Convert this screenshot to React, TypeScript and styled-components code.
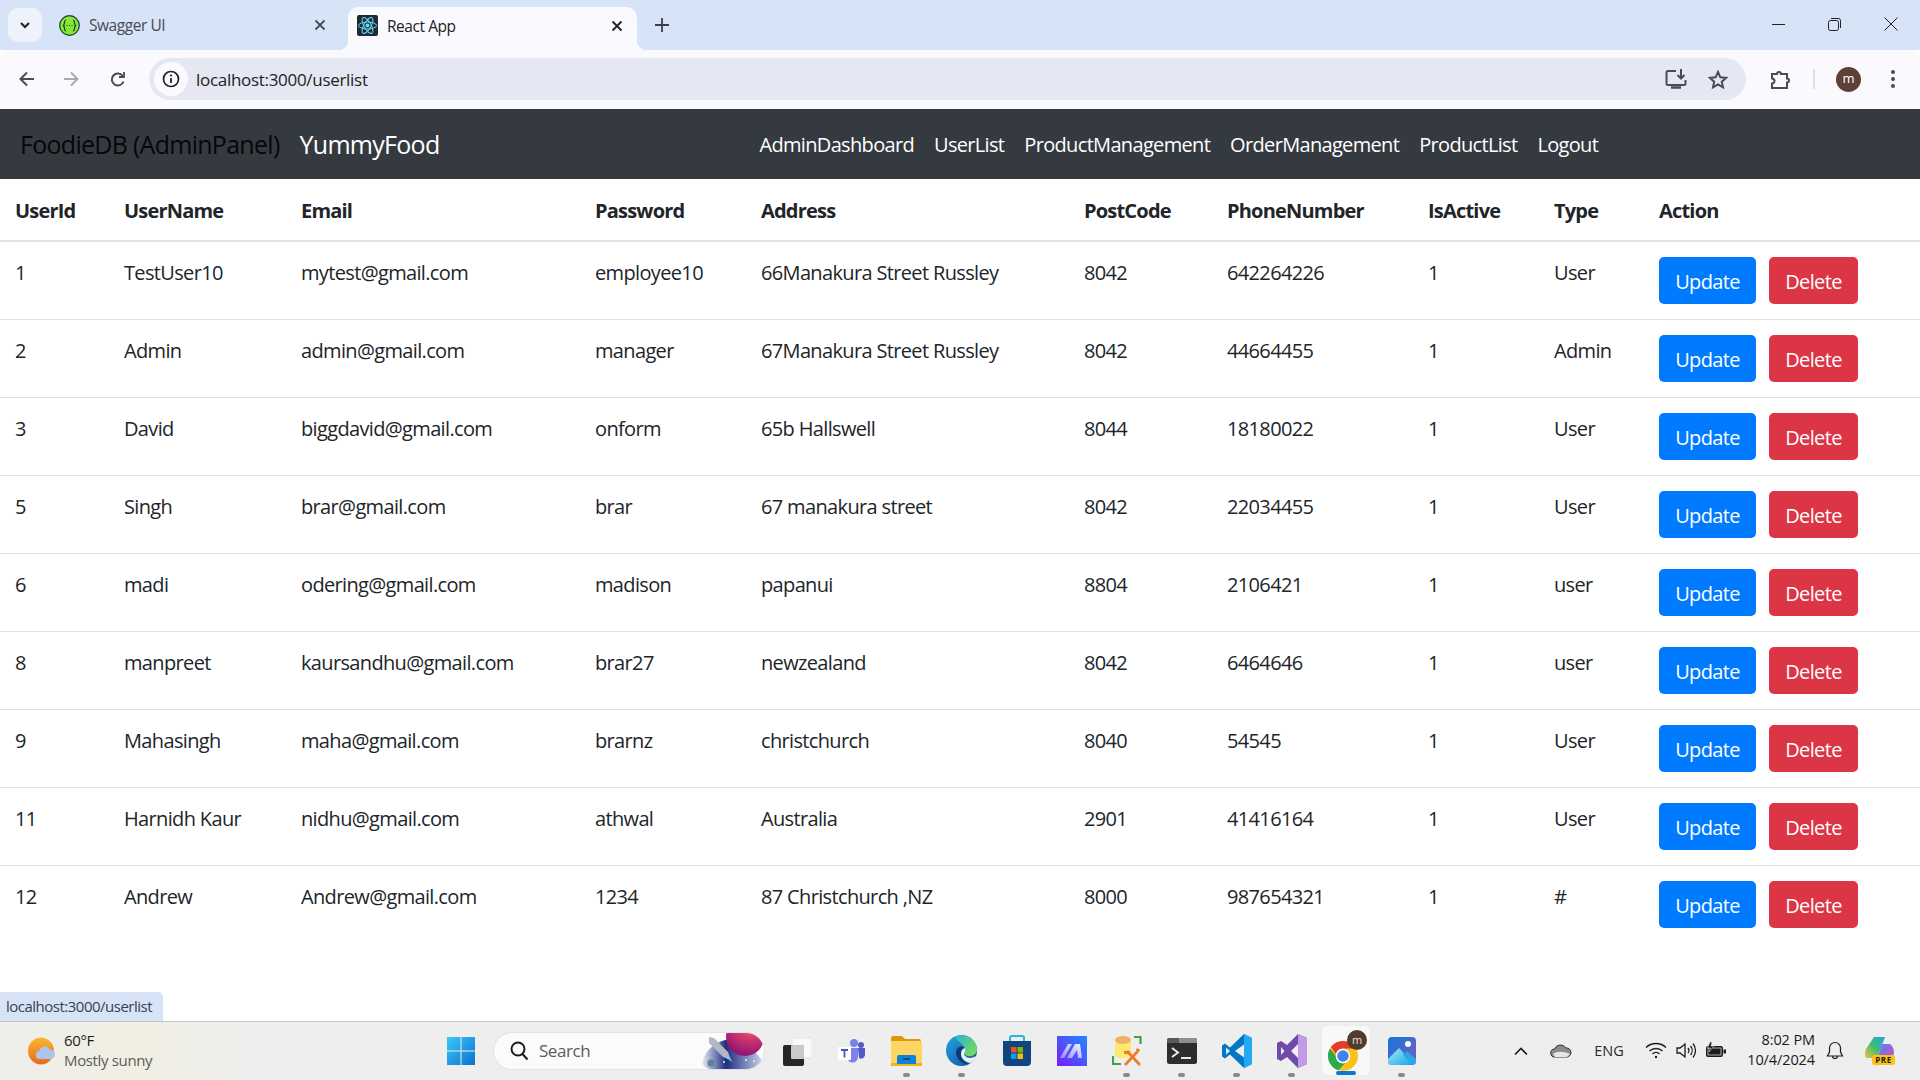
import React from "react";
import styled, { createGlobalStyle } from "styled-components";

const UI = `"Open Sans", "Noto Sans", "Liberation Sans", sans-serif`;

const Global = createGlobalStyle`
  html, body { margin: 0; padding: 0; background: #fff; }
  * { box-sizing: border-box; }
  #root { width: 1920px; height: 1080px; overflow: hidden; }
`;

const Screen = styled.div`
  position: relative;
  width: 1920px;
  height: 1080px;
  display: flex;
  flex-direction: column;
  font-family: ${UI};
  background: #fff;
  overflow: hidden;
`;

/* ---------- browser chrome ---------- */
const TabStrip = styled.div`
  height: 50px;
  background: #d7e3f7;
  display: flex;
  align-items: flex-end;
  padding-left: 8px;
`;
const TabMenu = styled.div`
  width: 34px;
  height: 34px;
  margin-bottom: 8px;
  border-radius: 10px;
  background: #eef2fb;
  display: flex;
  align-items: center;
  justify-content: center;
`;
const Tab = styled.div<{ $active?: boolean }>`
  position: relative;
  width: ${(p) => (p.$active ? "289px" : "295px")};
  height: ${(p) => (p.$active ? "43px" : "50px")};
  margin-left: ${(p) => (p.$active ? "3px" : "8px")};
  padding: ${(p) => (p.$active ? "0 14px 6px 9px" : "0 19px 0 9px")};
  display: flex;
  align-items: center;
  gap: 9px;
  font-size: 15.5px;
  letter-spacing: -0.45px;
  color: ${(p) => (p.$active ? "#1f2124" : "#474b52")};
  background: ${(p) => (p.$active ? "#f9f9fe" : "transparent")};
  border-radius: ${(p) => (p.$active ? "10px 10px 0 0" : "0")};
  ${(p) =>
    p.$active
      ? `&::before, &::after {
        content: "";
        position: absolute;
        bottom: 0;
        width: 10px;
        height: 10px;
      }
      &::before { left: -10px; background: radial-gradient(circle at 0 0, transparent 10px, #f9f9fe 10.5px); }
      &::after { right: -10px; background: radial-gradient(circle at 100% 0, transparent 10px, #f9f9fe 10.5px); }`
      : ""}
`;
const TabTitle = styled.span`
  flex: 1;
  white-space: nowrap;
`;
const NewTab = styled.div`
  width: 20px;
  height: 20px;
  margin: 0 0 15px 15px;
  display: flex;
  align-items: center;
  justify-content: center;
`;
const WindowControls = styled.div`
  margin-left: auto;
  height: 50px;
  display: flex;
  align-items: center;
  padding: 0 22px 2px 0;
  gap: 43px;
`;
const Toolbar = styled.div`
  height: 59px;
  background: #f9f9fe;
  border-radius: 10px 10px 0 0;
  display: flex;
  align-items: center;
  padding: 0 17px 1px 18px;
`;
const ToolButton = styled.div<{ $w?: number }>`
  width: ${(p) => p.$w ?? 44}px;
  height: 24px;
  display: flex;
  align-items: center;
  justify-content: flex-start;
`;
const AddressBar = styled.div`
  width: 1597px;
  height: 42px;
  margin-left: 7px;
  padding: 0 18px 0 5px;
  border-radius: 21px;
  background: #e5e8f3;
  display: flex;
  align-items: center;
`;
const InfoChip = styled.div`
  width: 34px;
  height: 34px;
  border-radius: 50%;
  background: #f9f9fe;
  display: flex;
  align-items: center;
  justify-content: center;
`;
const UrlText = styled.div`
  margin-left: 8px;
  flex: 1;
  font-size: 17px;
  letter-spacing: -0.3px;
  color: #1f2124;
`;
const AddressIcons = styled.div`
  display: flex;
  align-items: center;
  gap: 21px;
`;
const ToolRight = styled.div`
  flex: 1;
  display: flex;
  align-items: center;
  padding-left: 24px;
`;
const Divider = styled.div`
  width: 2px;
  height: 20px;
  margin: 0 21px 0 21px;
  background: #d3e1f8;
`;
const Avatar = styled.div`
  width: 25px;
  height: 25px;
  border-radius: 50%;
  background: #5d4037;
  color: #fff;
  font-size: 13px;
  line-height: 23px;
  text-align: center;
  margin-right: 29px;
`;

/* ---------- app navbar ---------- */
const Navbar = styled.nav`
  height: 70px;
  background: #343a40;
  display: flex;
  align-items: center;
  padding: 0 20px;
`;
const Brand = styled.a<{ $light?: boolean }>`
  font-size: 25px;
  letter-spacing: -0.72px;
  margin-right: 20px;
  white-space: nowrap;
  color: ${(p) => (p.$light ? "#fff" : "rgba(0,0,0,0.9)")};
`;
const NavLinks = styled.ul`
  list-style: none;
  margin: 0 0 0 300px;
  padding: 0;
  display: flex;
  gap: 20px;
`;
const NavLink = styled.li`
  font-size: 20px;
  letter-spacing: -0.67px;
  color: #fff;
  white-space: nowrap;
`;

/* ---------- table ---------- */
const Content = styled.main`
  flex: 1;
  min-height: 0;
`;
const Table = styled.table`
  width: 1920px;
  table-layout: fixed;
  border-collapse: collapse;
  color: #212529;
  font-size: 20px;
  line-height: 30px;
  letter-spacing: -0.65px;
`;
const Th = styled.th`
  text-align: left;
  font-weight: 700;
  padding: 16px 15px 14px;
  height: 62px;
  letter-spacing: -0.8px;
  border-bottom: 2px solid #dee2e6;
`;
const Tr = styled.tr`
  & + & td { border-top: 1px solid #dee2e6; }
`;
const Td = styled.td`
  padding: 16px 15px 14px;
  height: 78px;
  vertical-align: top;
  white-space: nowrap;
`;
const ActionTd = styled(Td)`
  padding: 15px;
`;
const Actions = styled.div`
  display: flex;
  gap: 13px;
`;
const Btn = styled.button<{ $danger?: boolean }>`
  height: 47px;
  width: ${(p) => (p.$danger ? "89px" : "97px")};
  border: 0;
  border-radius: 5px;
  padding: 2px 0 0;
  font-family: ${UI};
  font-size: 20px;
  letter-spacing: -0.65px;
  color: #fff;
  background: ${(p) => (p.$danger ? "#dc3545" : "#007bff")};
`;

const StatusBubble = styled.div`
  position: absolute;
  left: 0;
  bottom: 59px;
  width: 163px;
  height: 29px;
  padding-left: 6px;
  background: #d7e3f7;
  border-radius: 0 5px 0 0;
  font-size: 15px;
  line-height: 29px;
  letter-spacing: -0.5px;
  color: #3a4250;
`;

/* ---------- taskbar ---------- */
const Taskbar = styled.footer`
  height: 59px;
  border-top: 1px solid #c6c6c6;
  padding-bottom: 1px;
  background: linear-gradient(90deg, #eeeeec 0, #f1efe2 130px, #eeeeee 260px);
  display: flex;
  align-items: center;
  color: #1c1c1c;
`;
const Weather = styled.div`
  width: 446px;
  padding-left: 28px;
  display: flex;
  align-items: center;
  gap: 8px;
`;
const WeatherText = styled.div`
  font-size: 15px;
  line-height: 20px;
  letter-spacing: -0.35px;
  margin-bottom: 2px;
`;
const WeatherSub = styled.div`
  color: #5a5a5a;
`;
const SearchBox = styled.div`
  position: relative;
  width: 272px;
  height: 38px;
  margin-left: 17px;
  padding: 0 0 0 15px;
  background: #fbfbfb;
  border: 1px solid #e2e2e2;
  border-radius: 19px;
  display: flex;
  align-items: center;
  gap: 9px;
  font-size: 17px;
  letter-spacing: -0.45px;
  color: #5c5c5c;
  overflow: hidden;
`;
const SearchLabel = styled.span`
  flex: 1;
`;
const Slots = styled.div`
  margin-left: 4px;
  display: flex;
`;
const Slot = styled.div<{ $running?: boolean; $active?: boolean }>`
  position: relative;
  width: 55px;
  height: 55px;
  display: flex;
  align-items: center;
  justify-content: center;
  ${(p) =>
    p.$active
      ? `&::before { content: ""; position: absolute; top: 3px; bottom: 3px; left: 3px; right: 4px; border-radius: 5px; background: #f8f8f8; box-shadow: 0 0 0 1px #ececec; }
      &::after { content: ""; position: absolute; bottom: 3px; left: 17px; width: 20px; height: 4px; border-radius: 2px; background: #0a78d4; }`
      : p.$running
      ? `&::after { content: ""; position: absolute; bottom: 1px; left: 24px; width: 7px; height: 4px; border-radius: 2px; background: #8a8a8a; }`
      : ""}
  & > svg { position: relative; z-index: 1; }
`;
const Tray = styled.div`
  margin-left: auto;
  padding-right: 15px;
  display: flex;
  align-items: center;
`;
const TrayItem = styled.div<{ $w: number }>`
  width: ${(p) => p.$w}px;
  display: flex;
  align-items: center;
  justify-content: center;
  font-size: 14.5px;
  color: #2b2b2b;
`;
const Clock = styled.div`
  width: 80px;
  text-align: right;
  font-size: 14.5px;
  line-height: 20px;
  letter-spacing: -0.1px;
  color: #1c1c1c;
  margin-bottom: 2px;
`;

/* ---------- icons ---------- */
const Chevron = () => (
  <svg width="14" height="14" viewBox="0 0 14 14"><path d="M3 5l4 4 4-4" fill="none" stroke="#1f2124" strokeWidth="2" /></svg>
);
const Close = ({ c = "#474b52" }: { c?: string }) => (
  <svg width="12" height="12" viewBox="0 0 12 12" style={{ flex: "none" }}><path d="M1.5 1.5l9 9M10.5 1.5l-9 9" stroke={c} strokeWidth="1.8" /></svg>
);
const SwaggerIcon = () => (
  <svg width="21" height="21" viewBox="0 0 21 21" style={{ flex: "none" }}>
    <circle cx="10.5" cy="10.5" r="9.8" fill="#85ea2d" stroke="#173647" strokeWidth="1.2" />
    <path d="M7 5c-2 0-1 4-2.500 5.500C6 12 5 16 7 16M14 5c2 0 1 4 2.500 5.500C15 12 16 16 14 16" fill="none" stroke="#173647" strokeWidth="1.2" />
    <path d="M7.500 10.500h1M10 10.500h1M12.500 10.500h1" stroke="#173647" strokeWidth="1.2" />
  </svg>
);
const ReactIcon = () => (
  <svg width="21" height="21" viewBox="0 0 21 21" style={{ flex: "none" }}>
    <rect width="21" height="21" rx="2" fill="#222a31" />
    <g fill="none" stroke="#61dafb" strokeWidth="1">
      <ellipse cx="10.5" cy="10.5" rx="9" ry="3.5" />
      <ellipse cx="10.5" cy="10.5" rx="9" ry="3.5" transform="rotate(60 10.5 10.5)" />
      <ellipse cx="10.5" cy="10.5" rx="9" ry="3.5" transform="rotate(120 10.5 10.5)" />
    </g>
    <circle cx="10.5" cy="10.5" r="2" fill="#61dafb" />
  </svg>
);
const Plus = () => (
  <svg width="14" height="14" viewBox="0 0 14 14"><path d="M7 0v14M0 7h14" stroke="#3c4046" strokeWidth="1.8" /></svg>
);
const MinIcon = () => (
  <svg width="13" height="13" viewBox="0 0 13 13"><path d="M0 6.500h13" stroke="#1f2124" /></svg>
);
const RestoreIcon = () => (
  <svg width="13" height="13" viewBox="0 0 13 13" fill="none" stroke="#1f2124">
    <rect x="0.5" y="2.500" width="10" height="10" rx="2" />
    <path d="M3 .5h7.500a2 2 0 012 2V10" />
  </svg>
);
const CloseWin = () => (
  <svg width="14" height="14" viewBox="0 0 14 14"><path d="M.5.5l13 13M13.500.5l-13 13" stroke="#1f2124" /></svg>
);
const Arrow = ({ c, flip }: { c: string; flip?: boolean }) => (
  <svg width="18" height="18" viewBox="0 0 18 18" style={flip ? { transform: "scaleX(-1)" } : undefined}>
    <path d="M16 9H3M9 2.500L2.500 9 9 15.500" fill="none" stroke={c} strokeWidth="2" />
  </svg>
);
const Reload = () => (
  <svg width="18" height="18" viewBox="0 0 18 18" fill="none" stroke="#474c55" strokeWidth="2">
    <path d="M14.500 11.500a6 6 0 11-.8-5.500" />
    <path d="M15 2v5H10" strokeWidth="1.8" />
  </svg>
);
const Info = () => (
  <svg width="18" height="18" viewBox="0 0 18 18">
    <circle cx="9" cy="9" r="7.500" fill="none" stroke="#1f2124" strokeWidth="1.700" />
    <path d="M9 8v5" stroke="#1f2124" strokeWidth="1.800" />
    <circle cx="9" cy="5.500" r="1.100" fill="#1f2124" />
  </svg>
);
const InstallIcon = () => (
  <svg width="22" height="20" viewBox="0 0 22 20" fill="none" stroke="#474c55" strokeWidth="2">
    <path d="M11 2H3a1.500 1.500 0 00-1.500 1.500v11A1.500 1.500 0 003 16h16a1.500 1.500 0 001.500-1.500V11" />
    <path d="M6 18.500h10" strokeWidth="2.500" />
    <path d="M16 0v9M12.500 6l3.500 3.500L19.500 6" />
  </svg>
);
const Star = () => (
  <svg width="20" height="19" viewBox="0 0 20 19"><path d="M10 2l2.400 5.300 5.700.6-4.300 3.800 1.200 5.700L10 14.500l-5 2.900 1.200-5.700L1.900 7.900l5.700-.6z" fill="none" stroke="#474c55" strokeWidth="2" /></svg>
);
const Puzzle = () => (
  <svg width="22" height="22" viewBox="0 0 22 22"><path d="M2 6h5a2 2 0 114 0h6v4.500a2 2 0 110 4V20H2v-4.500a2.500 2.500 0 000-5z" fill="none" stroke="#474c55" strokeWidth="2" /></svg>
);
const Dots = () => (
  <svg width="6" height="20" viewBox="0 0 6 20" fill="#474c55"><circle cx="3" cy="3" r="2" /><circle cx="3" cy="10" r="2" /><circle cx="3" cy="17" r="2" /></svg>
);
const WeatherIcon = () => (
  <svg width="28" height="28" viewBox="0 0 28 28" style={{ flex: "none" }}>
    <defs><linearGradient id="sun" x1="0.5" y1="0" x2="0.5" y2="1"><stop offset="0" stopColor="#f7b733" /><stop offset="1" stopColor="#ea6a1c" /></linearGradient></defs>
    <ellipse cx="13" cy="14" rx="13" ry="13.500" fill="url(#sun)" />
    <path d="M12 22a4 4 0 01-.5-8 5.500 5.500 0 0110.500-1 4.500 4.500 0 011 9z" fill="#a9c7ee" />
  </svg>
);
const WinLogo = () => (
  <svg width="30" height="30" viewBox="0 0 30 30">
    <defs><linearGradient id="win" x1="0" y1="0" x2="1" y2="1"><stop offset="0" stopColor="#3cc8fb" /><stop offset="1" stopColor="#0a72cf" /></linearGradient></defs>
    <path d="M1 1h13.500v13.500H1zM15.500 1H29v13.500H15.500zM1 15.500h13.500V29H1zM15.500 15.500H29V29H15.500z" fill="url(#win)" />
  </svg>
);
const SearchGlyph = () => (
  <svg width="21" height="21" viewBox="0 0 21 21" style={{ flex: "none" }} fill="none" stroke="#1c1c1c" strokeWidth="2">
    <circle cx="9" cy="9" r="6.500" /><path d="M13.500 14l5 5.500" />
  </svg>
);
const SearchArt = () => (
  <svg width="64" height="36" viewBox="0 0 64 36" style={{ flex: "none" }}>
    <defs>
      <radialGradient id="pl" cx="0.65" cy="0.1" r="0.9"><stop offset="0" stopColor="#f59a5e" /><stop offset="0.45" stopColor="#d63a6f" /><stop offset="1" stopColor="#8f1470" /></radialGradient>
      <linearGradient id="sky" x1="0" y1="0" x2="1" y2="0"><stop offset="0" stopColor="#e9ecf8" /><stop offset="0.4" stopColor="#1f2f80" /><stop offset="1" stopColor="#c7cfe8" /></linearGradient>
    </defs>
    <path d="M2 30C6 14 20 6 34 6c12 4 24 14 28 22-4 6-10 8-14 8H12C8 36 4 34 2 30z" fill="url(#sky)" />
    <ellipse cx="45" cy="4" rx="19" ry="19" fill="url(#pl)" />
    <path d="M9 4l5 1 14 14 3 8-8-3L9 10z" fill="#b4b7c3" />
    <path d="M27 22l6 7-7-4z" fill="#7ec8f5" />
    <circle cx="11" cy="30" r="3.500" fill="#5f8297" />
    <circle cx="24" cy="29" r="1" fill="#eee" /><circle cx="46" cy="27" r="1" fill="#eee" /><circle cx="54" cy="28" r="1" fill="#eee" />
  </svg>
);
const TaskView = () => (
  <svg width="30" height="30" viewBox="0 0 30 30">
    <rect x="10" y="2" width="20" height="20" rx="2" fill="#fafafa" stroke="#e4e4e4" />
    <rect x="1" y="9" width="21" height="21" rx="2" fill="#262626" />
    <rect x="9" y="9" width="13" height="14" rx="1" fill="#c9c9c9" />
  </svg>
);
const Teams = () => (
  <svg width="28" height="26" viewBox="0 0 28 26">
    <circle cx="16" cy="5" r="4" fill="#7b83eb" /><circle cx="23" cy="7" r="3" fill="#5059c9" />
    <path d="M9 10h11v9a5.500 5.500 0 01-11 0z" fill="#7b83eb" />
    <path d="M20 10h7v7a4 4 0 01-6 3z" fill="#5059c9" />
    <rect x="0" y="9" width="13" height="13" fill="#fff" />
    <path d="M3 12h7M6.500 12v7.500" stroke="#4b53bc" strokeWidth="1.800" />
  </svg>
);
const Folder = () => (
  <svg width="31" height="31" viewBox="0 0 31 31">
    <path d="M0 3a2 2 0 012-2h9l3 3H28a2 2 0 012 2v3H0z" fill="#d99b05" />
    <path d="M0 6h29a2 2 0 012 2v21H0z" fill="#fcd562" />
    <path d="M0 28h31v3H0z" fill="#f0b51c" />
    <path d="M6 22a2 2 0 012-2h15a2 2 0 012 2v7H6z" fill="#0a84d6" />
    <path d="M12 24h7" stroke="#063d70" strokeWidth="1.500" />
  </svg>
);
const Edge = () => (
  <svg width="31" height="31" viewBox="0 0 31 31">
    <defs>
      <linearGradient id="ed1" x1="0" y1="0" x2="1" y2="1"><stop offset="0" stopColor="#27a4e0" /><stop offset="1" stopColor="#0c4f9c" /></linearGradient>
      <linearGradient id="ed2" x1="0" y1="0" x2="1" y2="0.8"><stop offset="0" stopColor="#22b5d8" /><stop offset="1" stopColor="#7cdc55" /></linearGradient>
    </defs>
    <circle cx="15.500" cy="15.500" r="15.500" fill="url(#ed1)" />
    <path d="M9 1.500C13 -.5 21 -1 27 5c3.500 3.500 4.500 9 3.500 12-1 3-5 5-9 4-2-.5-3.500-2-3.500-3 1.500-1 2-3 1-5C17 8 9 6 9 1.500z" fill="url(#ed2)" />
    <path d="M18 12c-4-1.500-8 1-8 6 0 4 4 9 9 11l5-1c-4 1-9-3-9-8 0-3 1-6 3-8z" fill="#0a3a7c" />
    <path d="M19 13c-3 1-4 3-4 6 0 4 4 8 9 9 3-1 5-4 6-7-3 2-8 3-11 0-1.500-1.500-1-3 0-4 1-1 .5-3 0-4z" fill="#f0f0f0" />
  </svg>
);
const Store = () => (
  <svg width="30" height="32" viewBox="0 0 30 32">
    <path d="M8 6V3a2 2 0 012-2h10a2 2 0 012 2v3" fill="none" stroke="#25b6e8" strokeWidth="2" />
    <path d="M1 6h28v21a4 4 0 01-4 4H5a4 4 0 01-4-4z" fill="#12457f" />
    <rect x="9" y="12" width="5.500" height="5.500" fill="#f25022" /><rect x="15.500" y="12" width="5.500" height="5.500" fill="#7fba00" />
    <rect x="9" y="18.500" width="5.500" height="5.500" fill="#00a4ef" /><rect x="15.500" y="18.500" width="5.500" height="5.500" fill="#ffb900" />
  </svg>
);
const MaIcon = () => (
  <svg width="30" height="30" viewBox="0 0 30 30">
    <defs>
      <linearGradient id="ma" x1="0" y1="1" x2="1" y2="0"><stop offset="0" stopColor="#7a1dfb" /><stop offset="1" stopColor="#1f8bff" /></linearGradient>
      <linearGradient id="mb" x1="0" y1="1" x2="1" y2="0"><stop offset="0" stopColor="#8f8cf5" /><stop offset="1" stopColor="#f2f4ff" /></linearGradient>
    </defs>
    <rect width="30" height="30" fill="url(#ma)" />
    <path d="M3 22L11 8h4L7 22zM10 22L18 8h5l2 14h-4l-1-8-5 8z" fill="url(#mb)" />
  </svg>
);
const DbTools = () => (
  <svg width="30" height="31" viewBox="0 0 30 31">
    <path d="M3 5c0-5 16-5 16 0v15c0 4-16 4-16 0z" fill="#fde96d" />
    <ellipse cx="11" cy="5" rx="8" ry="4" fill="#f0b268" />
    <path d="M22 2h6.500v7M1 21v8h8" fill="none" stroke="#3fa24c" strokeWidth="2.200" />
    <path d="M13 30L26 16M28 30L15 16" stroke="#ed7b21" strokeWidth="2.600" />
    <path d="M24 14c2-1 4 0 4 2l-3 1z" fill="#ed7b21" />
    <path d="M12 16h6v3h-6z" fill="#ed7b21" />
  </svg>
);
const Term = () => (
  <svg width="30" height="26" viewBox="0 0 30 26">
    <rect width="30" height="26" rx="2.500" fill="#2d2d2d" />
    <path d="M12 0h16a2 2 0 012 2v3H12z" fill="#8f8f8f" />
    <path d="M0 2a2 2 0 012-2h10v5H0z" fill="#5a5a5a" />
    <path d="M5 10l6 4.500L5 19" fill="none" stroke="#e8e8e8" strokeWidth="2" />
    <path d="M14 20h10" stroke="#e8e8e8" strokeWidth="2" />
  </svg>
);
const VsCode = () => (
  <svg width="30" height="34" viewBox="0 0 30 34">
    <path d="M22 0l8 4v26l-8 4-14-13.500L3 24.500 0 22.500V11.500l3-2 5 4z" fill="#0078c4" />
    <path d="M22 0l8 4v26l-8 4z" fill="#23a9f2" />
    <path d="M22 10.500L13 17l9 6.500z" fill="#eee" />
    <path d="M4 13.500l4 3.500-4 3.500z" fill="#eee" />
  </svg>
);
const VsIcon = () => (
  <svg width="30" height="34" viewBox="0 0 30 34">
    <path d="M21 0l9 4v26l-9 4-11-11-6 4-4-2V9l4-2 6 4z" fill="#6f4aa8" />
    <path d="M21 0l9 4v26l-9 4z" fill="#c19be8" />
    <path d="M21 10l-7 7 7 7z" fill="#f0eef5" />
    <path d="M4 13l3.500 4L4 21z" fill="#f0eef5" />
  </svg>
);
const ChromeIcon = () => (
  <svg width="40" height="44" viewBox="0 0 40 44">
    <circle cx="16" cy="27" r="15" fill="#fbc116" />
    <path d="M16 12a15 15 0 0113 7.500H16a7.500 7.500 0 00-7.100 5.200L3.900 18A15 15 0 0116 12z" fill="#e33b2e" />
    <path d="M3 19.500a15 15 0 008.500 21.800l6.500-7A7.500 7.500 0 018.700 27z" fill="#2da94f" />
    <circle cx="16" cy="27" r="6.500" fill="#3f83f0" stroke="#fff" strokeWidth="1.500" />
    <circle cx="30" cy="11" r="10" fill="#54392f" />
    <text x="30" y="15" textAnchor="middle" fontSize="11" fill="#e8e0dc" fontFamily="Open Sans">m</text>
  </svg>
);
const Photos = () => (
  <svg width="28" height="28" viewBox="0 0 28 28">
    <defs>
      <linearGradient id="ph" x1="0" y1="0" x2="1" y2="1"><stop offset="0" stopColor="#1576d8" /><stop offset="1" stopColor="#7a5bc0" /></linearGradient>
      <linearGradient id="ph2" x1="0" y1="0" x2="1" y2="1"><stop offset="0" stopColor="#a4ecfa" /><stop offset="1" stopColor="#18a6e6" /></linearGradient>
    </defs>
    <rect width="28" height="28" rx="4" fill="url(#ph)" />
    <path d="M0 22L11 11l13 14-2 3H4a4 4 0 01-4-4z" fill="url(#ph2)" />
    <path d="M15 18l4-4 9 8v2a4 4 0 01-4 4z" fill="#2aa7e8" />
    <circle cx="20" cy="7" r="3" fill="#fff" />
  </svg>
);
const Caret = () => (
  <svg width="16" height="10" viewBox="0 0 16 10"><path d="M2 8.500L8 2.500l6 6" fill="none" stroke="#1c1c1c" strokeWidth="1.600" /></svg>
);
const Cloud = () => (
  <svg width="22" height="15" viewBox="0 0 22 15">
    <path d="M5 14a4 4 0 01-.5-8A6.500 6.500 0 0116 5a4.500 4.500 0 011 9z" fill="#8a8a8a" stroke="#333" strokeWidth="1" />
    <path d="M3 11c4-3 10-3 17 0l-3 3H5z" fill="#e6e6e6" />
  </svg>
);
const Wifi = () => (
  <svg width="22" height="17" viewBox="0 0 22 17" fill="none" stroke="#1c1c1c" strokeWidth="1.400">
    <path d="M1 5.500a14.500 14.500 0 0120 0M4.500 9a9.500 9.500 0 0113 0M7.500 12a5 5 0 017 0" />
    <circle cx="11" cy="15" r="1.200" fill="#1c1c1c" stroke="none" />
  </svg>
);
const Volume = () => (
  <svg width="21" height="17" viewBox="0 0 21 17" fill="none" stroke="#1c1c1c" strokeWidth="1.300">
    <path d="M1 6h3l5-4v13l-5-4H1z" />
    <path d="M12 6a4 4 0 010 5M14.500 4a7 7 0 010 9M17 1.500a11 11 0 010 14" />
  </svg>
);
const Battery = () => (
  <svg width="22" height="17" viewBox="0 0 22 17">
    <rect x="1" y="4" width="17" height="11" rx="2" fill="#1c1c1c" />
    <rect x="3" y="6" width="13" height="7" fill="#1c1c1c" stroke="#eee" strokeWidth="0.700" />
    <rect x="18.500" y="7.500" width="2.500" height="4" fill="#1c1c1c" />
    <path d="M5 0L2.500 6h3L4 10l5-6H6l1-4z" fill="#1c1c1c" stroke="#eee" strokeWidth="0.500" />
  </svg>
);
const Bell = () => (
  <svg width="18" height="20" viewBox="0 0 18 20"><path d="M9 1.500a5.500 5.500 0 00-5.500 5.500v4L1.500 15h15l-2-4V7A5.500 5.500 0 009 1.500zM6.500 15a2.500 2.500 0 005 0" fill="none" stroke="#1c1c1c" strokeWidth="1.200" /></svg>
);
const Copilot = () => (
  <svg width="30" height="30" viewBox="0 0 30 30">
    <defs>
      <linearGradient id="cp1" x1="0" y1="1" x2="1" y2="0"><stop offset="0" stopColor="#f3c33c" /><stop offset="0.500" stopColor="#3ebd73" /><stop offset="1" stopColor="#22a2e8" /></linearGradient>
      <linearGradient id="cp2" x1="0" y1="0" x2="1" y2="1"><stop offset="0" stopColor="#4e87f0" /><stop offset="1" stopColor="#d24fc0" /></linearGradient>
    </defs>
    <path d="M9 1h11L12 22H3C-1 22-1 18 1 13z" fill="url(#cp1)" />
    <path d="M17 8h8c4 3 5 9 3 12l-3 3H12z" fill="url(#cp2)" />
    <rect x="7" y="19" width="23" height="10" rx="2.500" fill="#fbc312" />
    <text x="18.500" y="27" fontSize="8" fontWeight="700" textAnchor="middle" fill="#1c1c1c" fontFamily="Open Sans" letterSpacing="0.6">PRE</text>
  </svg>
);

/* ---------- data ---------- */
const columns = [
  { label: "UserId", w: 109 },
  { label: "UserName", w: 177 },
  { label: "Email", w: 294 },
  { label: "Password", w: 166 },
  { label: "Address", w: 323 },
  { label: "PostCode", w: 143 },
  { label: "PhoneNumber", w: 201 },
  { label: "IsActive", w: 126 },
  { label: "Type", w: 105 },
  { label: "Action", w: 276 },
];
const rows = [
  ["1", "TestUser10", "mytest@gmail.com", "employee10", "66Manakura Street Russley", "8042", "642264226", "1", "User"],
  ["2", "Admin", "admin@gmail.com", "manager", "67Manakura Street Russley", "8042", "44664455", "1", "Admin"],
  ["3", "David", "biggdavid@gmail.com", "onform", "65b Hallswell", "8044", "18180022", "1", "User"],
  ["5", "Singh", "brar@gmail.com", "brar", "67 manakura street", "8042", "22034455", "1", "User"],
  ["6", "madi", "odering@gmail.com", "madison", "papanui", "8804", "2106421", "1", "user"],
  ["8", "manpreet", "kaursandhu@gmail.com", "brar27", "newzealand", "8042", "6464646", "1", "user"],
  ["9", "Mahasingh", "maha@gmail.com", "brarnz", "christchurch", "8040", "54545", "1", "User"],
  ["11", "Harnidh Kaur", "nidhu@gmail.com", "athwal", "Australia", "2901", "41416164", "1", "User"],
  ["12", "Andrew", "Andrew@gmail.com", "1234", "87 Christchurch ,NZ", "8000", "987654321", "1", "#"],
];
const navItems = ["AdminDashboard", "UserList", "ProductManagement", "OrderManagement", "ProductList", "Logout"];

export default function App() {
  return (
    <Screen>
      <Global />
      <TabStrip>
        <TabMenu><Chevron /></TabMenu>
        <Tab>
          <SwaggerIcon />
          <TabTitle>Swagger UI</TabTitle>
          <Close />
        </Tab>
        <Tab $active>
          <ReactIcon />
          <TabTitle>React App</TabTitle>
          <Close c="#1f2124" />
        </Tab>
        <NewTab><Plus /></NewTab>
        <WindowControls>
          <MinIcon />
          <RestoreIcon />
          <CloseWin />
        </WindowControls>
      </TabStrip>
      <Toolbar>
        <ToolButton><Arrow c="#474c55" /></ToolButton>
        <ToolButton $w={47}><Arrow c="#a9abb2" flip /></ToolButton>
        <ToolButton $w={33}><Reload /></ToolButton>
        <AddressBar>
          <InfoChip><Info /></InfoChip>
          <UrlText>localhost:3000/userlist</UrlText>
          <AddressIcons>
            <InstallIcon />
            <Star />
          </AddressIcons>
        </AddressBar>
        <ToolRight>
          <Puzzle />
          <Divider />
          <Avatar>m</Avatar>
          <Dots />
        </ToolRight>
      </Toolbar>
      <Navbar>
        <Brand>FoodieDB (AdminPanel)</Brand>
        <Brand $light>YummyFood</Brand>
        <NavLinks>
          {navItems.map((n) => (
            <NavLink key={n}>{n}</NavLink>
          ))}
        </NavLinks>
      </Navbar>
      <Content>
        <Table>
          <colgroup>
            {columns.map((c) => (
              <col key={c.label} width={c.w} />
            ))}
          </colgroup>
          <thead>
            <tr>
              {columns.map((c) => (
                <Th key={c.label}>{c.label}</Th>
              ))}
            </tr>
          </thead>
          <tbody>
            {rows.map((r) => (
              <Tr key={r[0]}>
                {r.map((v, i) => (
                  <Td key={i}>{v}</Td>
                ))}
                <ActionTd>
                  <Actions>
                    <Btn>Update</Btn>
                    <Btn $danger>Delete</Btn>
                  </Actions>
                </ActionTd>
              </Tr>
            ))}
          </tbody>
        </Table>
      </Content>
      <StatusBubble>localhost:3000/userlist</StatusBubble>
      <Taskbar>
        <Weather>
          <WeatherIcon />
          <WeatherText>
            <div>60°F</div>
            <WeatherSub>Mostly sunny</WeatherSub>
          </WeatherText>
        </Weather>
        <WinLogo />
        <SearchBox>
          <SearchGlyph />
          <SearchLabel>Search</SearchLabel>
          <SearchArt />
        </SearchBox>
        <Slots>
          <Slot><TaskView /></Slot>
          <Slot><Teams /></Slot>
          <Slot $running><Folder /></Slot>
          <Slot $running><Edge /></Slot>
          <Slot><Store /></Slot>
          <Slot><MaIcon /></Slot>
          <Slot $running><DbTools /></Slot>
          <Slot $running><Term /></Slot>
          <Slot $running><VsCode /></Slot>
          <Slot $running><VsIcon /></Slot>
          <Slot $active><ChromeIcon /></Slot>
          <Slot $running><Photos /></Slot>
        </Slots>
        <Tray>
          <TrayItem $w={40}><Caret /></TrayItem>
          <TrayItem $w={40}><Cloud /></TrayItem>
          <TrayItem $w={56}>ENG</TrayItem>
          <TrayItem $w={38}><Wifi /></TrayItem>
          <TrayItem $w={22}><Volume /></TrayItem>
          <TrayItem $w={38}><Battery /></TrayItem>
          <Clock>
            <div>8:02 PM</div>
            <div>10/4/2024</div>
          </Clock>
          <TrayItem $w={40}><Bell /></TrayItem>
          <TrayItem $w={50}><Copilot /></TrayItem>
        </Tray>
      </Taskbar>
    </Screen>
  );
}
